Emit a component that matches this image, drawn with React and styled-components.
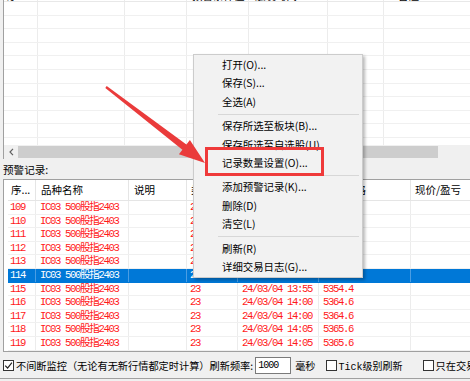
import React from 'react';
import styled, { createGlobalStyle } from 'styled-components';

const GlobalStyle = createGlobalStyle`
  html, body {
    margin: 0;
    padding: 0;
  }
  body {
    width: 470px;
    height: 381px;
    overflow: hidden;
    background: #f0f0f0;
    font-family: "Noto Sans CJK SC", "Noto Sans", sans-serif;
    color: #000;
  }
`;

const MONO = `"Liberation Mono", "Noto Sans CJK SC", monospace`;

const Window = styled.div`
  position: relative;
  width: 470px;
  height: 381px;
  overflow: hidden;
  background: #f0f0f0;
`;

/* ---------- upper grid (scrolled) ---------- */

const UpperPane = styled.div`
  margin-left: 3px;
  height: 159px;
  border-left: 1px solid #a0a0a0;
  display: flex;
  flex-direction: column;
`;

const UpperGrid = styled.div`
  height: 145px;
  overflow: hidden;
  background: #fff;
`;

const UpperHeader = styled.div`
  display: flex;
  height: 18px;
  margin-top: -16px;
  box-sizing: border-box;
  border-bottom: 1px solid #e8e8e8;
`;

const UpperHeadCell = styled.div`
  flex: none;
  width: ${p => p.$w}px;
  box-sizing: border-box;
  border-right: 1px solid #ececec;
  padding-left: ${p => p.$pad || 4}px;
  display: flex;
  align-items: flex-end;
  font-size: 10.5px;
  line-height: 11px;
  white-space: nowrap;
  overflow: hidden;
`;

const UpperRow = styled.div`
  display: flex;
  height: 13.6px;
  box-sizing: border-box;
  border-bottom: 1px solid #f0f0f0;
`;

const UpperCell = styled.div`
  flex: none;
  width: ${p => p.$w}px;
  box-sizing: border-box;
  border-right: 1px solid #ececec;
`;

const HScroll = styled.div`
  height: 14px;
  display: flex;
  align-items: center;
  background: #f0f0f0;
`;

const ScrollArrow = styled.div`
  width: 14px;
  height: 14px;
  display: flex;
  align-items: center;
  justify-content: center;
`;

const ScrollThumb = styled.div`
  width: 420px;
  height: 12px;
  background: #cdcdcd;
`;

/* ---------- label + lower table ---------- */

const SectionLabel = styled.div`
  height: 20px;
  padding-left: 3px;
  font-size: 10.6px;
  line-height: 22px;
`;

const LowerTable = styled.div`
  margin-left: 3px;
  height: 173px;
  box-sizing: border-box;
  border: 1px solid #a0a0a0;
  border-right: none;
  background: #fff;
  padding-left: 4px;
  overflow: hidden;
`;

const HeaderRow = styled.div`
  display: flex;
  height: 21px;
  box-sizing: border-box;
  border-bottom: 1px solid #e5e5e5;
`;

const HeaderCell = styled.div`
  flex: none;
  width: ${p => p.$w}px;
  box-sizing: border-box;
  border-right: 1px solid #e5e5e5;
  padding-left: ${p => p.$pad}px;
  font-size: 10.5px;
  line-height: 20px;
  white-space: nowrap;
  overflow: hidden;
`;

const Row = styled.div`
  display: flex;
  height: 13.6px;
  box-sizing: border-box;
  border-bottom: 1px solid ${p => (p.$selected ? '#0078d7' : '#f0f0f0')};
  background: ${p => (p.$selected ? '#0078d7' : 'transparent')};
  color: ${p => (p.$selected ? '#fff' : '#ff1a1a')};
`;

const Cell = styled.div`
  flex: none;
  width: ${p => p.$w}px;
  box-sizing: border-box;
  border-right: 1px solid ${p => (p.$selected ? '#4a9de3' : '#ececec')};
  padding-left: ${p => p.$pad}px;
  font-family: ${MONO};
  font-size: 10.6px;
  letter-spacing: -1.36px;
  line-height: 12.6px;
  white-space: nowrap;
  overflow: hidden;
`;

/* ---------- status bar ---------- */

const StatusBar = styled.div`
  height: 27px;
  box-sizing: border-box;
  border-bottom: 1px solid #a0a0a0;
  display: flex;
  align-items: center;
  padding-left: 3px;
  font-size: 10.2px;
  white-space: nowrap;
`;

const Box = styled.span`
  flex: none;
  width: 11px;
  height: 11px;
  box-sizing: border-box;
  border: 1px solid #333;
  background: #fff;
  display: flex;
  align-items: center;
  justify-content: center;
  margin-left: ${p => p.$ml || 0}px;
  margin-right: 2px;
`;

const StatusText = styled.span`
  margin-left: ${p => p.$ml || 0}px;
  font-family: ${p => (p.$mono ? MONO : 'inherit')};
  font-size: ${p => (p.$mono ? '10px' : 'inherit')};
`;

const IntervalInput = styled.span`
  flex: none;
  width: 36px;
  height: 17px;
  box-sizing: border-box;
  margin-left: 2px;
  border: 1px solid #7a7a7a;
  background: #fff;
  padding-left: 2px;
  font-family: ${MONO};
  font-size: 10px;
  letter-spacing: -1px;
  line-height: 15px;
`;

/* ---------- overlays ---------- */

const Menu = styled.div`
  position: absolute;
  left: 193px;
  top: 54px;
  width: 170px;
  box-sizing: border-box;
  padding: 1px 0;
  background: #f2f2f2;
  border: 1px solid #cccccc;
  box-shadow: 2px 2px 3px rgba(0, 0, 0, 0.28);
`;

const MenuItem = styled.div`
  height: 18.4px;
  line-height: 18.4px;
  padding-left: 28px;
  font-size: 10.4px;
  white-space: nowrap;
`;

const MenuSeparator = styled.div`
  height: 1px;
  margin: 2.5px 3px 2.5px 24px;
  background: #d7d7d7;
`;

const Highlight = styled.div`
  position: absolute;
  left: 205px;
  top: 147px;
  width: 119px;
  height: 29px;
  box-sizing: border-box;
  border: 3px solid #ef3a3a;
`;

const ArrowLayer = styled.svg`
  position: absolute;
  left: 0;
  top: 0;
  pointer-events: none;
`;

const upperHeadCells = [
  { w: 34, t: '序', pad: 3 },
  { w: 87, t: '' },
  { w: 62, t: '' },
  { w: 62, t: '预警条件值', pad: 5 },
  { w: 79, t: '触发时间', pad: 6 },
  { w: 56, t: '' },
  { w: 100, t: '备注', pad: 14 },
];

const cols = [
  { w: 28, pad: 2, key: 'id', title: '序...' },
  { w: 93, pad: 4, key: 'name', title: '品种名称' },
  { w: 58, pad: 4, key: 'note', title: '说明' },
  { w: 51, pad: 3, key: 'type', title: '类型' },
  { w: 81, pad: 4, key: 'time', title: '预警时间' },
  { w: 92, pad: 4, key: 'price', title: '预警价格' },
  { w: 100, pad: 3, key: 'pnl', title: '现价/盈亏' },
];

const rows = [
  ['109', '13:30', '5342.0'],
  ['110', '13:35', '5345.8'],
  ['111', '13:40', '5348.2'],
  ['112', '13:45', '5350.6'],
  ['113', '13:50', '5352.4'],
  ['114', '13:55', '5354.4'],
  ['115', '13:55', '5354.4'],
  ['116', '14:00', '5364.6'],
  ['117', '14:00', '5364.6'],
  ['118', '14:05', '5365.6'],
  ['119', '14:05', '5365.6'],
].map(([id, t, price]) => ({
  id,
  name: 'IC03 500股指2403',
  note: '',
  type: '23',
  time: `24/03/04 ${t}`,
  price,
  pnl: '',
}));

const menu = [
  '打开(O)...',
  '保存(S)...',
  '全选(A)',
  '-',
  '保存所选至板块(B)...',
  '保存所选至自选股(U)',
  '记录数量设置(O)...',
  '-',
  '添加预警记录(K)...',
  '删除(D)',
  '清空(L)',
  '-',
  '刷新(R)',
  '详细交易日志(G)...',
];

const Check = () => (
  <svg width="9" height="9" viewBox="0 0 9 9">
    <path d="M1.2 4.6 L3.6 7 L7.9 1.6" fill="none" stroke="#222" strokeWidth="1.2" />
  </svg>
);

const App = () => (
  <Window>
    <GlobalStyle />

    <UpperPane>
      <UpperGrid>
        <UpperHeader>
          {upperHeadCells.map((c, i) => (
            <UpperHeadCell key={i} $w={c.w} $pad={c.pad}>{c.t}</UpperHeadCell>
          ))}
        </UpperHeader>
        {Array.from({ length: 11 }).map((_, r) => (
          <UpperRow key={r}>
            {upperHeadCells.map((c, i) => (
              <UpperCell key={i} $w={c.w} />
            ))}
          </UpperRow>
        ))}
      </UpperGrid>
      <HScroll>
        <ScrollArrow>
          <svg width="5" height="8" viewBox="0 0 5 8">
            <path d="M4 0.8 L1 4 L4 7.2" fill="none" stroke="#606060" strokeWidth="1.2" />
          </svg>
        </ScrollArrow>
        <ScrollThumb />
      </HScroll>
    </UpperPane>

    <SectionLabel>预警记录:</SectionLabel>

    <LowerTable>
      <HeaderRow>
        {cols.map(c => (
          <HeaderCell key={c.key} $w={c.w} $pad={c.pad + 1}>{c.title}</HeaderCell>
        ))}
      </HeaderRow>
      {rows.map(r => {
        const selected = r.id === '114';
        return (
          <Row key={r.id} $selected={selected}>
            {cols.map(c => (
              <Cell key={c.key} $w={c.w} $pad={c.pad} $selected={selected}>
                {r[c.key]}
              </Cell>
            ))}
          </Row>
        );
      })}
    </LowerTable>

    <StatusBar>
      <Box><Check /></Box>
      <StatusText>不间断监控（无论有无新行情都定时计算）刷新频率:</StatusText>
      <IntervalInput>1000</IntervalInput>
      <StatusText $ml={4}>毫秒</StatusText>
      <Box $ml={10} />
      <StatusText $mono>Tick级别刷新</StatusText>
      <Box $ml={20} />
      <StatusText>只在交易时间段刷新</StatusText>
    </StatusBar>

    <Menu>
      {menu.map((m, i) =>
        m === '-' ? <MenuSeparator key={i} /> : <MenuItem key={i}>{m}</MenuItem>
      )}
    </Menu>

    <Highlight />

    <ArrowLayer width="470" height="381" viewBox="0 0 470 381">
      <polygon
        points="106.7,86 186.4,144.6 189.9,140.1 205,163 178.9,154.3 182.4,149.8 105.3,88"
        fill="#ea3b3b"
      />
    </ArrowLayer>
  </Window>
);

export default App;
